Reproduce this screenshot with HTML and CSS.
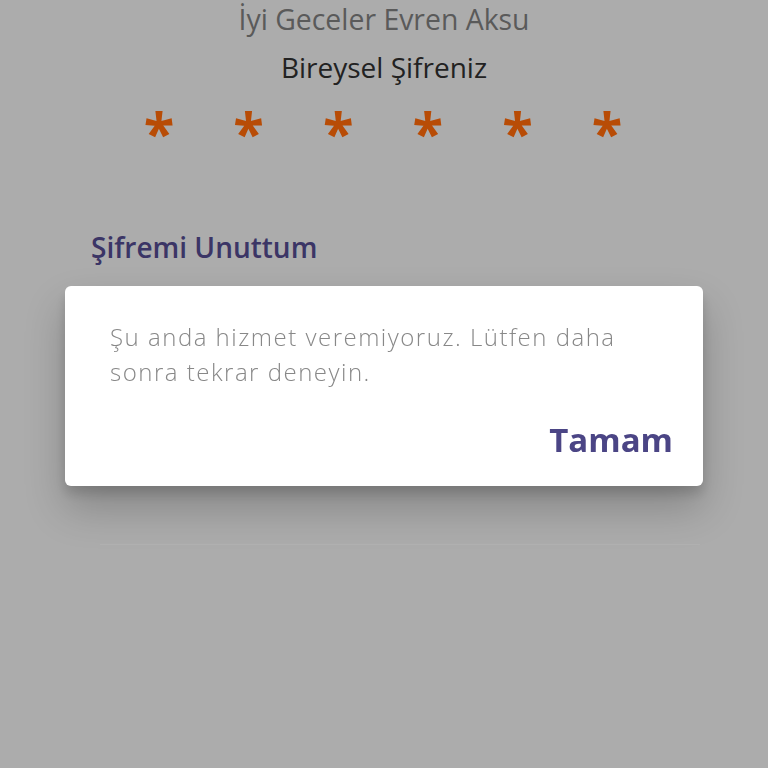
FILE: index.html
```html
<!DOCTYPE html>
<html lang="tr">

<head>
  <meta charset="UTF-8">
  <meta name="viewport" content="width=device-width, initial-scale=1.0">
  <title>Bireysel Şifreniz</title>
  <link rel="stylesheet" href="styles.css">
</head>

<body>
  <div id="login">
    <p class="greeting">İyi Geceler Evren Aksu</p>
    <p class="label">Bireysel Şifreniz</p>
    <div class="pin">
      <span>*</span>
      <span>*</span>
      <span>*</span>
      <span>*</span>
      <span>*</span>
      <span>*</span>
    </div>
    <a class="forgot" href="#">Şifremi Unuttum</a>
    <div class="underline"></div>
  </div>

  <div id="overlay">
    <div class="dialog">
      <p class="message">Şu anda hizmet veremiyoruz. Lütfen daha sonra tekrar deneyin.</p>
      <div class="actions">
        <button type="button">Tamam</button>
      </div>
    </div>
  </div>
</body>

</html>
```

FILE: styles.css
```css
body {
  font-family: "Open Sans", "Noto Sans", sans-serif;
  margin: 0;
  padding: 0;
  background-color: #acacac;
  height: 768px;
  overflow: hidden;
}

p {
  margin: 0;
}

#login {
  display: flex;
  flex-direction: column;
  align-items: center;
}

.greeting {
  color: #5a5a5a;
  font-size: 28.4px;
  line-height: 38px;
}

.label {
  color: #222;
  font-size: 28px;
  line-height: 38px;
  margin-top: 10px;
}

.pin {
  display: flex;
  margin-top: 17px;
  margin-left: -2px;
  color: #b84c06;
  font-size: 56px;
  font-weight: 700;
  line-height: 56px;
}

.pin span {
  width: 89.6px;
  text-align: center;
}

.forgot {
  align-self: flex-start;
  margin: 69px 0 0 91px;
  color: #3b3566;
  font-size: 28px;
  font-weight: 600;
  text-decoration: none;
}

.underline {
  width: 600px;
  height: 1px;
  margin-top: 278px;
  margin-left: 100px;
  align-self: flex-start;
  background: #b1b1b1;
}

/* ダイアログ */
#overlay {
  position: fixed;
  inset: 0;
  padding-top: 4px;
  display: flex;
  align-items: center;
  justify-content: center;
}

.dialog {
  width: 638px;
  height: 200px;
  box-sizing: border-box;
  padding: 33px 30px 0 45px;
  background: #fff;
  border-radius: 6px;
  box-shadow: 0 22px 40px rgba(0, 0, 0, 0.22), 0 8px 12px rgba(0, 0, 0, 0.14);
}

.message {
  max-width: 540px;
  color: #888;
  font-size: 24px;
  font-weight: 300;
  letter-spacing: 1.5px;
  line-height: 35px;
}

.actions {
  display: flex;
  justify-content: flex-end;
  margin-top: 28px;
}

button {
  padding: 0;
  border: none;
  background: none;
  color: #4b4585;
  font-family: inherit;
  font-size: 33px;
  font-weight: 700;
  cursor: pointer;
}
```
